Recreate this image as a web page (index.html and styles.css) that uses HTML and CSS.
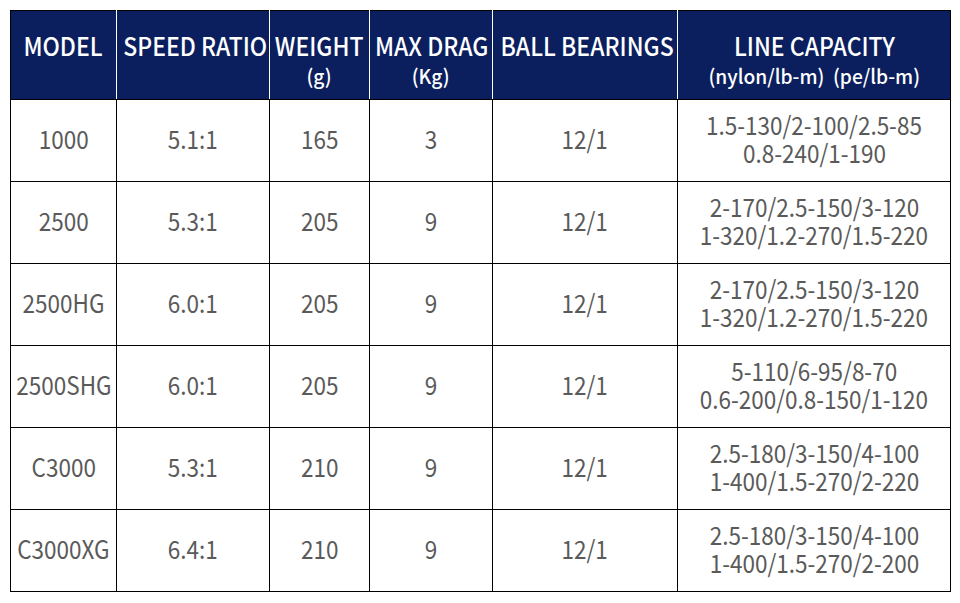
FILE: index.html
```html
<!DOCTYPE html>
<html>
<head>
<meta charset="utf-8">
<link rel="stylesheet" href="styles.css">
</head>
<body>
<table class="spec">
  <colgroup>
    <col class="c-model"><col class="c-ratio"><col class="c-weight"><col class="c-drag"><col class="c-bear"><col class="c-line">
  </colgroup>
  <thead>
    <tr>
      <th><div class="h1"><span class="t">MODEL</span></div></th>
      <th><div class="h1"><span class="t">SPEED RATIO</span></div></th>
      <th><div class="h1"><span class="t">WEIGHT</span></div><div class="h2"><span class="t">(g)</span></div></th>
      <th><div class="h1"><span class="t">MAX DRAG</span></div><div class="h2"><span class="t">(Kg)</span></div></th>
      <th><div class="h1"><span class="t">BALL BEARINGS</span></div></th>
      <th><div class="h1"><span class="t">LINE CAPACITY</span></div><div class="h2"><span class="t">(nylon/lb-m)&nbsp; (pe/lb-m)</span></div></th>
    </tr>
  </thead>
  <tbody>
    <tr><td><span class="t">1000</span></td><td><span class="t">5.1:1</span></td><td><span class="t">165</span></td><td><span class="t">3</span></td><td><span class="t">12/1</span></td><td><span class="t l">1.5-130/2-100/2.5-85</span><br><span class="t l">0.8-240/1-190</span></td></tr>
    <tr><td><span class="t">2500</span></td><td><span class="t">5.3:1</span></td><td><span class="t">205</span></td><td><span class="t">9</span></td><td><span class="t">12/1</span></td><td><span class="t l">2-170/2.5-150/3-120</span><br><span class="t l">1-320/1.2-270/1.5-220</span></td></tr>
    <tr><td><span class="t">2500HG</span></td><td><span class="t">6.0:1</span></td><td><span class="t">205</span></td><td><span class="t">9</span></td><td><span class="t">12/1</span></td><td><span class="t l">2-170/2.5-150/3-120</span><br><span class="t l">1-320/1.2-270/1.5-220</span></td></tr>
    <tr><td><span class="t">2500SHG</span></td><td><span class="t">6.0:1</span></td><td><span class="t">205</span></td><td><span class="t">9</span></td><td><span class="t">12/1</span></td><td><span class="t l">5-110/6-95/8-70</span><br><span class="t l">0.6-200/0.8-150/1-120</span></td></tr>
    <tr><td><span class="t">C3000</span></td><td><span class="t">5.3:1</span></td><td><span class="t">210</span></td><td><span class="t">9</span></td><td><span class="t">12/1</span></td><td><span class="t l">2.5-180/3-150/4-100</span><br><span class="t l">1-400/1.5-270/2-220</span></td></tr>
    <tr><td><span class="t">C3000XG</span></td><td><span class="t">6.4:1</span></td><td><span class="t">210</span></td><td><span class="t">9</span></td><td><span class="t">12/1</span></td><td><span class="t l">2.5-180/3-150/4-100</span><br><span class="t l">1-400/1.5-270/2-200</span></td></tr>
  </tbody>
</table>
</body>
</html>
```
FILE: styles.css
```css
html, body {
  margin: 0;
  padding: 0;
  background: #fff;
}
body {
  padding: 10px;
  font-family: "Noto Sans CJK JP", "Noto Sans", sans-serif;
}
.spec {
  border-collapse: collapse;
  table-layout: fixed;
  width: 940px;
}
.c-model { width: 106px; }
.c-ratio { width: 153px; }
.c-weight { width: 100px; }
.c-drag { width: 123px; }
.c-bear { width: 185px; }
.c-line { width: 273px; }

.t {
  display: inline-block;
  transform: scaleX(0.9);
  white-space: nowrap;
}
.l {
  line-height: 28px;
  height: 28px;
  overflow: visible;
}

.spec th {
  background: #0b1f5e;
  color: #fff;
  height: 88px;
  padding: 0;
  vertical-align: top;
  border: 1px solid #000;
  border-left: 1px solid #fff;
  border-right: 1px solid #fff;
  font-weight: 500;
  text-align: center;
  white-space: nowrap;
}
.spec th:first-child { border-left: 1px solid #000; }
.spec th:last-child { border-right: 1px solid #000; }
.h1 {
  padding-top: 19px;
  font-size: 25px;
  line-height: 30px;
}
.h1 .t { transform: scaleX(0.92); }
.h2 {
  font-size: 20px;
  line-height: 32px;
}
.h2 .t { transform: scaleX(0.96); }
.spec td {
  border: 1.5px solid #000;
  height: 76px;
  padding: 0 0 5px;
  text-align: center;
  vertical-align: middle;
  color: #5a5a5a;
  font-size: 25px;
  line-height: 28px;
  white-space: nowrap;
}
```
